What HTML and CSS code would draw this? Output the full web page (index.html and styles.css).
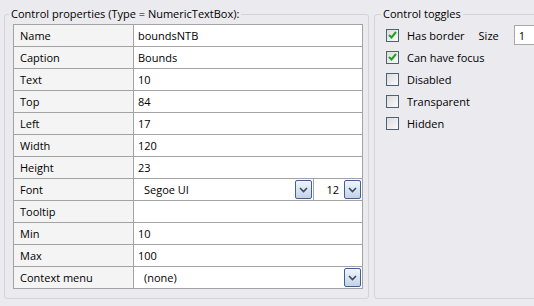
FILE: index.html
```html
<!DOCTYPE html>
<html>
<head>
<meta charset="utf-8">
<link rel="stylesheet" href="styles.css">
</head>
<body>
<div class="main">
  <fieldset class="group props-group">
    <legend>Control properties (Type = NumericTextBox):</legend>
    <div class="props">
      <div class="lab">Name</div><div class="val">boundsNTB</div>
      <div class="lab">Caption</div><div class="val">Bounds</div>
      <div class="lab">Text</div><div class="val">10</div>
      <div class="lab">Top</div><div class="val">84</div>
      <div class="lab">Left</div><div class="val">17</div>
      <div class="lab">Width</div><div class="val">120</div>
      <div class="lab">Height</div><div class="val">23</div>
      <div class="lab">Font</div>
      <div class="val val-combo">
        <div class="combo combo-font"><span>Segoe UI</span><span class="dd"><svg width="9" height="6" viewBox="0 0 9 6"><path d="M1 1 L4.5 4.5 L8 1" fill="none" stroke="#3a4a60" stroke-width="1.6"/></svg></span></div>
        <div class="combo combo-size"><span>12</span><span class="dd"><svg width="9" height="6" viewBox="0 0 9 6"><path d="M1 1 L4.5 4.5 L8 1" fill="none" stroke="#3a4a60" stroke-width="1.6"/></svg></span></div>
      </div>
      <div class="lab">Tooltip</div><div class="val"></div>
      <div class="lab">Min</div><div class="val">10</div>
      <div class="lab">Max</div><div class="val">100</div>
      <div class="lab">Context menu</div>
      <div class="val val-combo">
        <div class="combo combo-font"><span>(none)</span><span class="dd"><svg width="9" height="6" viewBox="0 0 9 6"><path d="M1 1 L4.5 4.5 L8 1" fill="none" stroke="#3a4a60" stroke-width="1.6"/></svg></span></div>
      </div>
    </div>
  </fieldset>
  <fieldset class="group toggles-group">
    <legend>Control toggles</legend>
    <div class="toggles">
      <div class="trow"><span class="cb checked"><svg width="9" height="8" viewBox="0 0 9 8"><path d="M1 4 L3.5 6.5 L8 1" fill="none" stroke="#21a121" stroke-width="2"/></svg></span><span class="tl">Has border</span><span class="size-lab">Size</span><span class="size-box">1</span></div>
      <div class="trow"><span class="cb checked"><svg width="9" height="8" viewBox="0 0 9 8"><path d="M1 4 L3.5 6.5 L8 1" fill="none" stroke="#21a121" stroke-width="2"/></svg></span><span class="tl">Can have focus</span></div>
      <div class="trow"><span class="cb"></span><span class="tl">Disabled</span></div>
      <div class="trow"><span class="cb"></span><span class="tl">Transparent</span></div>
      <div class="trow"><span class="cb"></span><span class="tl">Hidden</span></div>
    </div>
  </fieldset>
</div>
</body>
</html>
```
FILE: styles.css
```css
html, body {
  margin: 0;
  padding: 0;
  background: #ebeaef;
  width: 534px;
  height: 306px;
  overflow: hidden;
}
body {
  font-family: "Open Sans", "Noto Sans", sans-serif;
  font-size: 11px;
  color: #000;
}
.main {
  display: flex;
  gap: 5px;
  padding-left: 4px;
  padding-top: 6px;
  width: 534px;
  height: 306px;
  box-sizing: border-box;
  overflow: hidden;
}
.group {
  margin: 0;
  border: 1px solid #d3d3da;
  border-radius: 3px;
  min-width: 0;
  flex: none;
}
.group legend {
  padding: 0 2px;
  line-height: 16px;
  height: 16px;
  white-space: nowrap;
}
.props-group {
  width: 365px;
  height: 293px;
  box-sizing: border-box;
  padding: 2px 5px 10px 8px;
}
.props-group legend {
  margin-left: -4px;
}
.props {
  display: grid;
  grid-template-columns: 120px 229px;
  grid-auto-rows: 22px;
  border-top: 1px solid #a3a3a3;
  border-left: 1px solid #a3a3a3;
  width: 350px;
  box-sizing: border-box;
}
.lab, .val {
  border-right: 1px solid #a3a3a3;
  border-bottom: 1px solid #a3a3a3;
  display: flex;
  align-items: center;
  box-sizing: border-box;
}
.lab {
  background: #f4f4f4;
  padding-left: 6px;
}
.val {
  background: #fff;
  padding-left: 4px;
}
.val-combo {
  padding-left: 0;
}
.combo {
  display: flex;
  align-items: center;
  height: 100%;
  box-sizing: border-box;
}
.combo-font {
  flex: 1;
  justify-content: space-between;
  padding-left: 10px;
  padding-right: 1px;
}
.combo-size {
  width: 49px;
  border-left: 1px solid #a3a3a3;
  justify-content: flex-end;
  gap: 5px;
  padding-right: 1px;
}
.dd {
  width: 17px;
  height: 19px;
  box-sizing: border-box;
  border: 1px solid #3f6391;
  border-radius: 2px;
  background: linear-gradient(#f1f5fb, #c4d2e6);
  display: flex;
  align-items: center;
  justify-content: center;
}
.toggles-group {
  width: 200px;
  height: 293px;
  box-sizing: border-box;
  padding: 2px 0 0 11px;
}
.toggles-group legend {
  margin-left: -5px;
}
.toggles {
  display: flex;
  flex-direction: column;
}
.trow {
  height: 22px;
  display: flex;
  align-items: center;
  white-space: nowrap;
}
.trow > span {
  flex: none;
}
.cb {
  width: 13px;
  height: 13px;
  box-sizing: border-box;
  border: 1px solid #4c6279;
  background: linear-gradient(135deg, #dcdcdc, #fafafa);
  display: flex;
  align-items: center;
  justify-content: center;
}
.tl {
  margin-left: 8px;
}
.size-lab {
  margin-left: 14px;
}
.size-box {
  margin-left: 15px;
  height: 20px;
  width: 40px;
  box-sizing: border-box;
  border: 1px solid #a8a8a8;
  background: #fff;
  padding-left: 4px;
  display: flex;
  align-items: center;
}
```
